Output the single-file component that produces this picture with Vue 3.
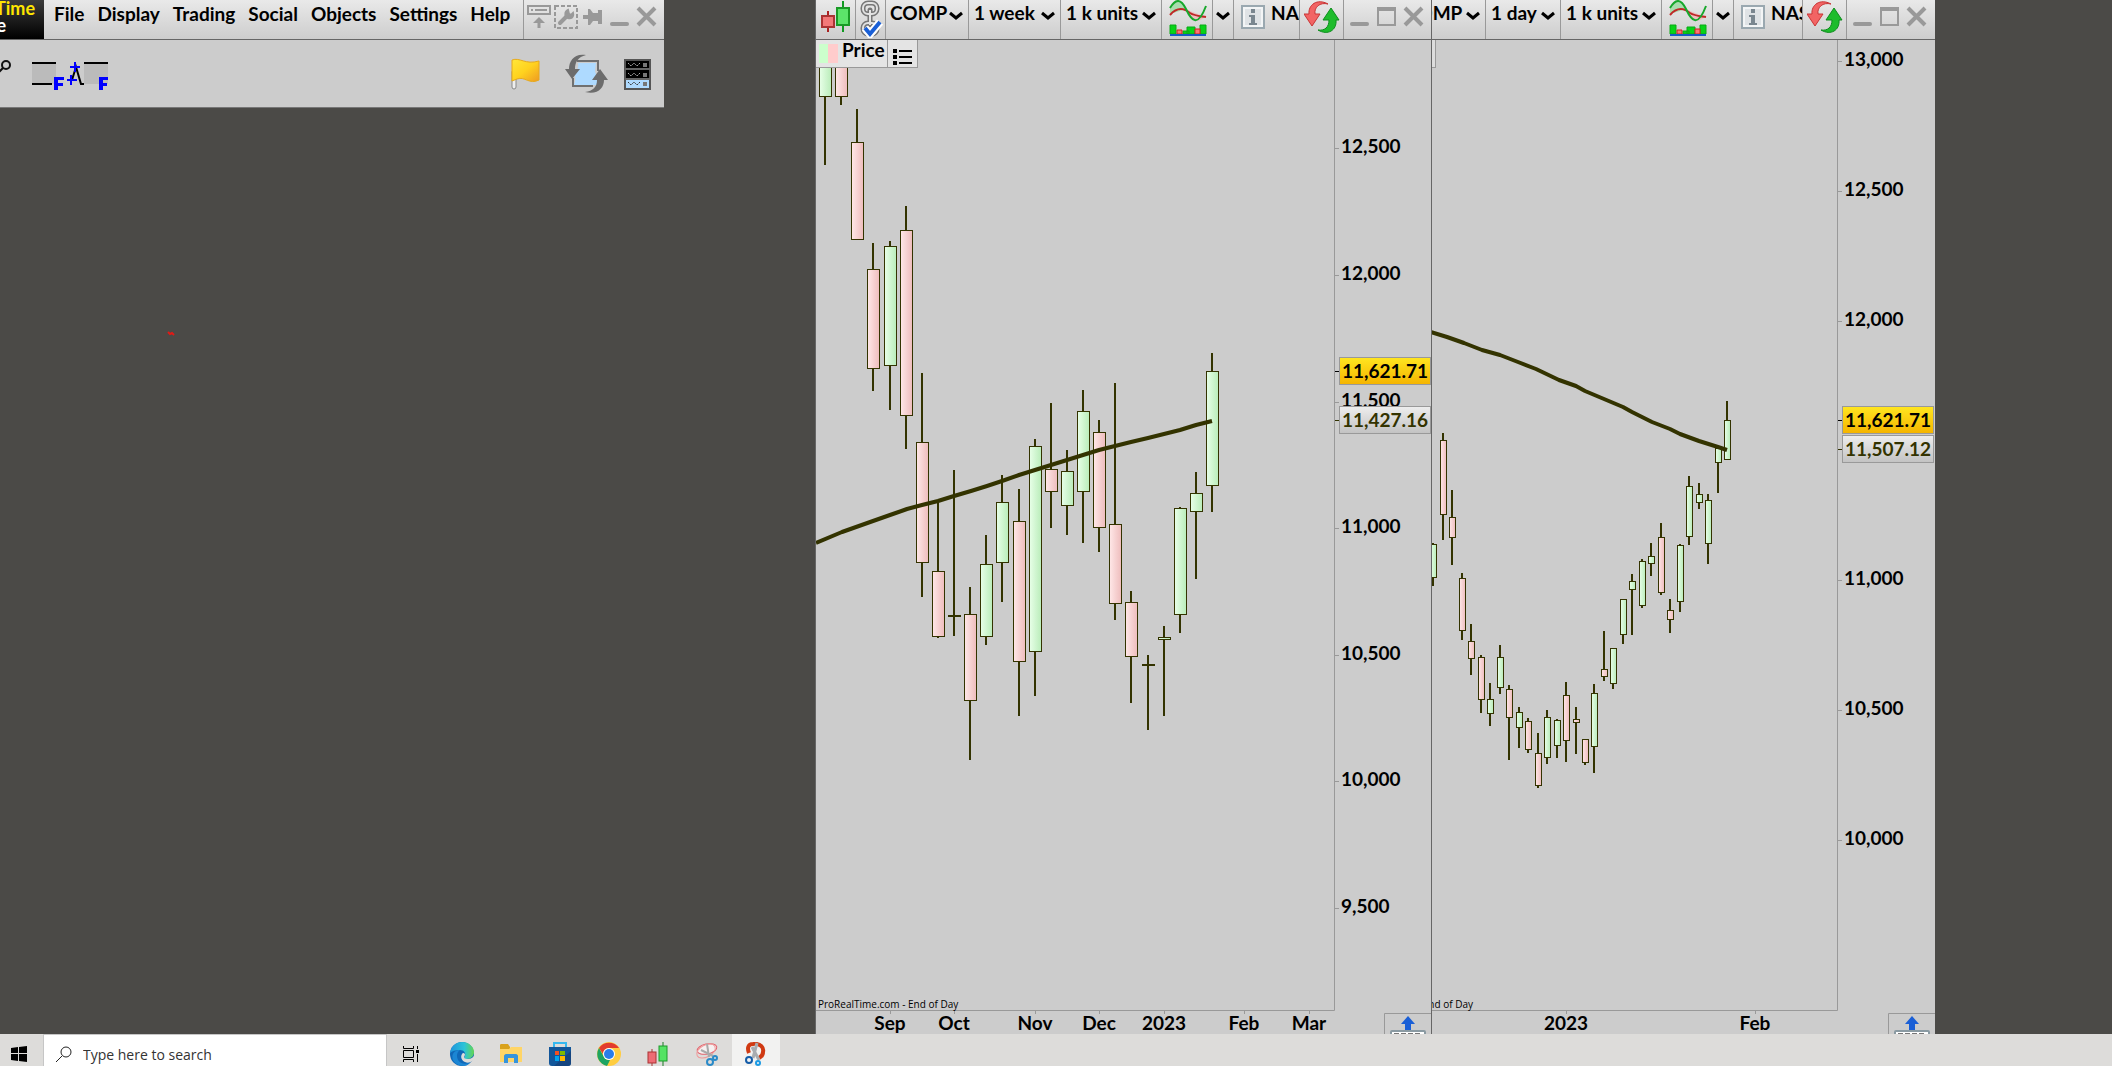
<script setup>
const menus = ['File', 'Display', 'Trading', 'Social', 'Objects', 'Settings', 'Help']

// candle: [x, high, body top, body bottom, low, rising]
const panels = [
  {
    id: 'weekly',
    origin: 816,
    width: 615,
    axisX: 1334,
    symbolWidth: 83,
    symbolCell: 83,
    period: '1 week',
    periodCell: 92,
    nameCell: 66,
    full: true,
    footer: { x: 818, anchor: 'start' },
    months: [[890, 'Sep'], [954, 'Oct'], [1035, 'Nov'], [1099, 'Dec'], [1164, '2023'], [1244, 'Feb'], [1309, 'Mar']],
    prices: [[148, '12,500'], [275, '12,000'], [402, '11,500'], [528, '11,000'], [655, '10,500'], [781, '10,000'], [908, '9,500']],
    last: { y: 371, text: '11,621.71' },
    average: { y: 420, text: '11,427.16' },
    line: '816,543 842,532 873,521 890,515 907,509 922,505 938,501 954,496 971,491 987,486 1002,481 1019,475 1035,470 1051,465 1067,460 1083,455 1099,450 1115,446 1131,442 1148,438 1164,434 1180,430 1196,425 1212,421',
    half: 6,
    candles: [
      [825, 40, 40, 97, 165, 1], [841, 40, 40, 97, 105, 0], [857, 109, 142, 240, 240, 0],
      [873, 243, 269, 369, 391, 0], [890, 241, 246, 366, 410, 1], [906, 206, 230, 416, 449, 0],
      [922, 373, 442, 563, 597, 0], [938, 503, 571, 637, 638, 0], [954, 470, 615, 617, 636, 0],
      [970, 587, 614, 701, 760, 0], [986, 535, 564, 637, 645, 1], [1002, 475, 502, 563, 602, 1],
      [1019, 489, 521, 662, 716, 0], [1035, 439, 446, 652, 696, 1], [1051, 403, 469, 492, 528, 0],
      [1067, 450, 471, 506, 535, 1], [1083, 390, 411, 492, 543, 1], [1099, 420, 432, 528, 552, 0],
      [1115, 383, 524, 604, 620, 0], [1131, 591, 602, 657, 703, 0], [1148, 655, 664, 666, 730, 0],
      [1164, 626, 637, 640, 716, 1], [1180, 507, 508, 615, 633, 1], [1196, 472, 493, 512, 579, 1],
      [1212, 353, 371, 486, 512, 1],
    ],
  },
  {
    id: 'daily',
    origin: 1432,
    width: 503,
    axisX: 1837,
    symbolWidth: 85,
    symbolCell: 54,
    period: '1 day',
    periodCell: 75,
    nameCell: 69,
    full: false,
    footer: { x: 1473, anchor: 'end' },
    months: [[1566, '2023'], [1755, 'Feb']],
    prices: [[61, '13,000'], [191, '12,500'], [321, '12,000'], [580, '11,000'], [710, '10,500'], [840, '10,000']],
    last: { y: 420, text: '11,621.71' },
    average: { y: 449, text: '11,507.12' },
    line: '1431,332 1447,337 1464,343 1482,350 1500,355 1518,362 1536,369 1559,380 1576,386 1585,391 1604,399 1623,407 1632,412 1642,417 1652,422 1670,429 1680,434 1699,441 1718,447 1727,450',
    half: 3,
    candles: [
      [1433, 543, 544, 578, 586, 1], [1443, 433, 440, 515, 540, 0], [1452, 490, 517, 538, 565, 0],
      [1462, 573, 578, 631, 640, 0], [1471, 624, 641, 659, 675, 0], [1481, 655, 657, 700, 713, 0],
      [1490, 683, 699, 714, 726, 1], [1500, 645, 657, 688, 694, 1], [1509, 685, 689, 718, 760, 0],
      [1519, 707, 712, 728, 748, 1], [1528, 718, 721, 750, 753, 0], [1538, 733, 753, 786, 788, 0],
      [1547, 710, 717, 758, 764, 1], [1557, 719, 720, 746, 758, 1], [1566, 682, 695, 741, 762, 0],
      [1576, 707, 719, 723, 754, 0], [1585, 739, 739, 763, 765, 0], [1594, 684, 693, 747, 773, 1],
      [1604, 631, 669, 677, 681, 0], [1613, 648, 648, 684, 689, 1], [1623, 599, 599, 635, 644, 1],
      [1632, 574, 581, 590, 635, 1], [1642, 559, 561, 606, 608, 1], [1651, 543, 556, 564, 576, 1],
      [1661, 523, 537, 593, 595, 0], [1670, 599, 610, 620, 633, 0], [1680, 544, 545, 602, 612, 1],
      [1689, 476, 486, 537, 545, 1], [1699, 483, 494, 503, 509, 1], [1708, 494, 500, 544, 564, 1],
      [1718, 448, 448, 463, 493, 1], [1727, 401, 420, 460, 460, 1],
    ],
  },
]
</script>

<template>
  <div class="screen">
    <main class="workspace">
      <section class="left">
        <div class="main-window">
          <header class="menubar">
            <div class="brand"><span class="brand-top">Time</span><span class="brand-sub">e</span></div>
            <nav class="menus">
              <button v-for="m in menus" :key="m" type="button">{{ m }}</button>
            </nav>
            <div class="window-tools">
              <button type="button" aria-label="Dock">
                <svg width="24" height="24" viewBox="0 0 24 24" fill="none" stroke="#999" stroke-width="2"><rect x="1" y="1" width="22" height="8" /><path d="M4 5h2M8 5h12" /><path d="M12 23v-7" stroke-width="3" /><path d="M6 18l6-6 6 6z" fill="#999" stroke="none" /></svg>
              </button>
              <button type="button" aria-label="Preferences">
                <svg width="24" height="24" viewBox="0 0 24 24" fill="none" stroke="#999"><rect x="1" y="1" width="22" height="22" stroke-width="2" stroke-dasharray="4 2" /><path d="M6 18l7-7" stroke-width="4" stroke-linecap="round" /><path d="M19 8c1 4-2 6-5 5-3-1-4-6 0-8l1 4 2 1z" fill="#999" stroke-width="2" /></svg>
              </button>
              <button type="button" aria-label="Pin">
                <svg width="24" height="24" viewBox="0 0 24 24"><path d="M2 10h5V4h2l3 4h5V5h4v14h-4v-3h-5l-3 4H7v-6H2z" fill="#999" /></svg>
              </button>
              <button type="button" aria-label="Minimize">
                <svg width="24" height="24" viewBox="0 0 24 24"><path d="M4 19h15" stroke="#999" stroke-width="4" stroke-linecap="round" /></svg>
              </button>
              <button type="button" aria-label="Close">
                <svg width="24" height="24" viewBox="0 0 24 24"><path d="M3 3l17 17M20 3L3 20" stroke="#999" stroke-width="4" /></svg>
              </button>
            </div>
          </header>
          <div class="toolbar">
            <div class="tools">
              <button type="button" aria-label="Zoom">
                <svg width="12" height="34" viewBox="0 0 12 34" fill="none" stroke="#111" stroke-width="2"><circle cx="6" cy="8" r="4" /><path d="M3 11l-4 4" /></svg>
              </button>
              <button type="button" aria-label="Fixed range">
                <svg width="36" height="34" viewBox="0 0 36 34"><path d="M3 7h24v20H3z" fill="#bbb" /><path d="M3 6h24M3 27h20" stroke="#000" stroke-width="2" /><path d="M25 33V20h10v3h-6v3h5v3h-5v4z" fill="#00f" /></svg>
              </button>
              <button type="button" aria-label="Fixed peaks">
                <svg width="44" height="34" viewBox="0 0 44 34"><path d="M18 7h24v20H18z" fill="#bbb" /><path d="M18 6h24" stroke="#000" stroke-width="2" /><path d="M6 23l4-13 5 17h3" fill="none" stroke="#000" stroke-width="2" /><path d="M9 5v10M4 10h10M5 18v10M1 23h10" stroke="#00f" stroke-width="2" /><path d="M33 33V20h9v3h-5v3h4v3h-4v4z" fill="#00f" /></svg>
              </button>
            </div>
            <div class="tools actions">
              <button type="button" aria-label="Flag">
                <svg width="40" height="40" viewBox="0 0 40 40"><defs><linearGradient id="flag" x2="1" y2="1"><stop offset="0" stop-color="#ffe73a" /><stop offset=".5" stop-color="#ffd21e" /><stop offset="1" stop-color="#ee9a22" /></linearGradient></defs><rect x="3" y="16" width="4" height="19" rx="2" fill="#eee" stroke="#888" /><path d="M3 6c8-3 13 5 27 1v19c-10 5-14-4-22-1l-5 2z" fill="url(#flag)" stroke="#e6a91d" /></svg>
              </button>
              <button type="button" aria-label="Synchronize">
                <svg width="44" height="40" viewBox="0 0 44 40"><path d="M14 9h18c-1 8-2 9 2 14l-1 8H10c3-9 0-9-1-12 4-1 6-5 5-10z" fill="#aedaff" /><path d="M13 7h21v10M9 24v8h20" fill="none" stroke="#707070" stroke-width="2" /><path d="M22 1C10-1 5 7 5 15H1l7 10 8-10h-5C11 8 14 3 22 1z" fill="#6c6c6c" /><path d="M21 38c13 3 19-4 19-12h4l-8-11-8 11h5c0 7-4 11-12 12z" fill="#6c6c6c" /></svg>
              </button>
              <button type="button" aria-label="Servers">
                <svg width="28" height="40" viewBox="0 0 28 40"><rect x="2" y="6" width="25" height="29" fill="#000" stroke="#555" stroke-width="2" /><path d="M3 25h23v9H3z" fill="#aedaff" /><path d="M2 15h25M2 25h25" stroke="#666" stroke-width="2" /><g fill="none" stroke="#aaa" stroke-dasharray="2 1"><path d="M5 9l3 3 3-3 3 3 3-3M5 19l3 3 3-3 3 3 3-3" /><path d="M5 28l3 3 3-3 3 3 3-3" stroke="#333" /></g><path d="M20 9h4v4h-4zM20 19h4v4h-4zM20 28h4v4h-4z" fill="#777" /></svg>
              </button>
            </div>
          </div>
        </div>
        <svg class="ink" width="8" height="6" viewBox="0 0 8 6" aria-hidden="true"><path d="M1 1l2 2 2-1 2 2" fill="none" stroke="#e01a16" stroke-width="2" /></svg>
      </section>

      <section v-for="p in panels" :key="p.id" class="chart-window" :class="p.id">
        <header class="chart-bar">
          <button v-if="p.full" type="button" class="cell candle-cell" aria-label="Chart style">
            <svg width="32" height="34" viewBox="0 0 32 34"><path d="M9 11v21" stroke="#a22" stroke-width="2" /><rect x="3" y="16" width="12" height="11" fill="#f27878" stroke="#a33" stroke-width="2" /><path d="M24 1v31" stroke="#119a22" stroke-width="2" /><rect x="18" y="8" width="12" height="17" fill="#5ce46a" stroke="#1a9a26" stroke-width="2" /></svg>
          </button>
          <button v-if="p.full" type="button" class="cell link-cell" aria-label="Link windows">
            <svg width="24" height="38" viewBox="0 0 24 38" fill="none"><g stroke="#777" stroke-width="5"><rect x="4" y="3" width="14" height="11" rx="5" /><rect x="4" y="23" width="14" height="11" rx="5" /><path d="M11 10v15" stroke-linecap="round" /></g><g stroke="#e2e2e2" stroke-width="2"><rect x="4" y="3" width="14" height="11" rx="5" /><rect x="4" y="23" width="14" height="11" rx="5" /><path d="M11 10v15" /></g><path d="M6 28l5 6 10-12" stroke="#fff" stroke-width="8" /><path d="M6 28l5 6 10-12" stroke="#1a5fd6" stroke-width="4" /></svg>
          </button>
          <div class="cell pick" :style="{ width: p.symbolCell + 'px' }">
            <select aria-label="Symbol" :style="{ width: p.symbolWidth + 'px' }"><option>COMP</option></select>
            <svg class="chev" width="14" height="10" viewBox="0 0 14 10"><path d="M1 2l6 5 6-5" /></svg>
          </div>
          <div class="cell pick" :style="{ width: p.periodCell + 'px' }">
            <select aria-label="Period"><option>{{ p.period }}</option></select>
            <svg class="chev" width="14" height="10" viewBox="0 0 14 10"><path d="M1 2l6 5 6-5" /></svg>
          </div>
          <div class="cell pick units">
            <select aria-label="History length"><option>1 k units</option></select>
            <svg class="chev" width="14" height="10" viewBox="0 0 14 10"><path d="M1 2l6 5 6-5" /></svg>
          </div>
          <button type="button" class="cell indicator-cell" aria-label="Indicators">
            <svg width="38" height="38" viewBox="0 0 38 38"><path d="M1 8C7-2 12-1 17 9L1 14z" fill="#a9dcae" /><path d="M17 9c9 4 14 6 20 7-8 8-15 6-20-7z" fill="#ecc0c0" /><path d="M1 15c7-8 14-7 20-2 5 3 10 3 16 4" fill="none" stroke="#c02828" stroke-width="2" /><path d="M1 8C7-2 12-1 17 9c6 13 12 18 20-3" fill="none" stroke="#18a82c" stroke-width="2" /><path d="M1 25h6v9H1zM14 31h6v3h-6zM18 27h8v7h-8zM31 25h6v9h-6z" fill="#08d418" stroke="#0aa916" /><path d="M8 30h5v4H8zM26 29h5v5h-5z" fill="#ff7474" stroke="#c22" /><path d="M1 35h36" stroke="#185cc4" stroke-width="2" /></svg>
          </button>
          <button type="button" class="cell more-cell" aria-label="More indicators">
            <svg class="chev" width="14" height="10" viewBox="0 0 14 10"><path d="M1 2l6 5 6-5" /></svg>
          </button>
          <div class="cell name-cell" :style="{ width: p.nameCell + 'px' }">
            <svg width="24" height="24" viewBox="0 0 24 24"><rect x="1" y="1" width="22" height="22" fill="#f3f5f6" stroke="#9aa8b0" stroke-width="2" /><path d="M4 4h16v16H4z" fill="#dfe3e6" /><path d="M10 4h4v4h-4zM8 10h6v8h2v2H8v-2h2v-6H8z" fill="#7a8790" /></svg>
            <span>NASDAQ</span>
          </div>
          <button type="button" class="cell refresh-cell" aria-label="Refresh">
            <svg width="36" height="34" viewBox="0 0 36 34"><path d="M24 4C13-2 4 5 5 14H0l8 12 8-12h-5c-1-7 5-12 13-10z" fill="#f26464" stroke="#c83434" /><path d="M14 30c10 6 19 0 18-10h3L27 8l-8 12h6c0 7-4 11-11 10z" fill="#1ebc2c" stroke="#0c8d1c" /></svg>
          </button>
          <div class="controls">
            <button type="button" aria-label="Minimize"><svg width="21" height="22" viewBox="0 0 21 22"><path d="M3 18h15" stroke="#999" stroke-width="4" stroke-linecap="round" /></svg></button>
            <button type="button" aria-label="Maximize"><svg width="21" height="22" viewBox="0 0 21 22"><path d="M2 2h17v17H2zM2 4h17" fill="none" stroke="#999" stroke-width="2" /></svg></button>
            <button type="button" aria-label="Close"><svg width="21" height="22" viewBox="0 0 21 22"><path d="M2 2l17 17M19 2L2 19" stroke="#999" stroke-width="4" /></svg></button>
          </div>
        </header>

        <div class="chart-body">
          <svg class="chart" :viewBox="`${p.origin} 40 ${p.width} 994`" role="img" :aria-label="p.period + ' price chart'">
            <defs>
              <linearGradient :id="p.id + 'Up'"><stop offset="0" stop-color="#e8ffe8" /><stop offset="1" stop-color="#b9ecb9" /></linearGradient>
              <linearGradient :id="p.id + 'Down'"><stop offset="0" stop-color="#ffe8e8" /><stop offset="1" stop-color="#eebcbc" /></linearGradient>
              <linearGradient :id="p.id + 'Last'" x2="0" y2="1"><stop offset="0" stop-color="#ffe620" /><stop offset="1" stop-color="#f5b400" /></linearGradient>
              <linearGradient :id="p.id + 'Avg'" x2="0" y2="1"><stop offset="0" stop-color="#eee" /><stop offset="1" stop-color="#c2c2c2" /></linearGradient>
            </defs>
            <g v-for="c in p.candles" :key="c[0]">
              <rect :x="c[0] - 1" :y="c[1]" width="2" :height="c[4] - c[1]" fill="#330" />
              <rect :x="c[0] - p.half + 0.5" :y="c[2] + 0.5" :width="p.half * 2" :height="Math.max(c[3] - c[2] - 1, 1)" :fill="`url(#${p.id}${c[5] ? 'Up' : 'Down'})`" stroke="#330" />
            </g>
            <polyline :points="p.line" fill="none" stroke="#330" stroke-width="4" stroke-linejoin="round" />
            <path :d="`M${p.origin} 1010.5H${p.axisX + 0.5}V40`" fill="none" stroke="#999" />
            <text class="credit" :x="p.footer.x" y="1008" :text-anchor="p.footer.anchor">ProRealTime.com - End of Day</text>
            <g v-for="m in p.months" :key="m[1]">
              <path :d="`M${m[0] + 0.5} 1011v3`" stroke="#999" />
              <text class="label" :x="m[0]" y="1030" text-anchor="middle">{{ m[1] }}</text>
            </g>
            <g v-for="r in p.prices" :key="r[1]">
              <path :d="`M${p.axisX + 1} ${r[0] + 0.5}h4`" stroke="#999" />
              <text class="label" :x="p.axisX + 7" :y="r[0] + 5">{{ r[1] }}</text>
            </g>
            <path :d="`M${p.axisX + 1} ${p.last.y + 0.5}h4`" stroke="#000" />
            <path :d="`M${p.axisX + 1} ${p.average.y + 0.5}h4`" stroke="#330" />
            <rect :x="p.axisX + 5.5" :y="p.average.y - 13.5" width="91" height="27" :fill="`url(#${p.id}Avg)`" stroke="#999" />
            <text class="label avg" :x="p.axisX + 8" :y="p.average.y + 7">{{ p.average.text }}</text>
            <rect :x="p.axisX + 5.5" :y="p.last.y - 13.5" width="91" height="27" :fill="`url(#${p.id}Last)`" stroke="#999" />
            <text class="label" :x="p.axisX + 8" :y="p.last.y + 7">{{ p.last.text }}</text>
            <g :transform="`translate(${p.origin + p.width - 47} 1013)`">
              <path d="M.5 22V.5H47" fill="none" stroke="#999" />
              <path d="M24 3l7 8h-4v6h-6v-6h-4z" fill="#1a5fd6" />
              <rect x="7" y="18" width="34" height="8" rx="1" fill="#fff" stroke="#8a9aa2" stroke-width="2" />
              <path d="M10 20.5h28" stroke="#777" stroke-dasharray="5 2" />
            </g>
          </svg>
          <div class="legend" :class="{ folded: !p.full }">
            <template v-if="p.full">
              <span class="legend-name"><i class="swatch"></i>Price</span>
              <button type="button" aria-label="Price settings">
                <svg width="20" height="16" viewBox="0 0 20 16"><path d="M0 0h4v4H0zM0 6h4v4H0zM0 12h4v4H0z" /><path d="M6 2h13M6 8h13M6 14h13" stroke="#000" stroke-width="2" /></svg>
              </button>
            </template>
          </div>
        </div>
      </section>
    </main>

    <footer class="taskbar">
      <button type="button" class="start" aria-label="Start">
        <svg width="16" height="16" viewBox="0 0 16 16"><path d="M0 2l7-1v6H0zM8 1l8-1v7H8zM0 8h7v7l-7-1zM8 8h8v8l-8-1z" /></svg>
      </button>
      <label class="search">
        <svg width="18" height="18" viewBox="0 0 18 18" fill="none" stroke="#222"><circle cx="11" cy="7" r="5" /><path d="M7 11l-6 6" /></svg>
        <input type="text" aria-label="Search" placeholder="Type here to search" />
      </label>
      <button type="button" class="task-view" aria-label="Task view">
        <svg width="18" height="16" viewBox="0 0 18 16" fill="none" stroke="#000"><path d="M1.500 4.500h10v7h-10zM1.500 0v2.500h10V0M1.500 16v-2.500h10V16M15.500 0v3M15.500 8v8" /><path d="M14 4h3v3h-3z" fill="#000" stroke="none" /></svg>
      </button>
      <div class="apps">
        <button type="button" aria-label="Edge">
          <svg width="24" height="24" viewBox="0 0 24 24"><defs><linearGradient id="edgeTop" x2="1"><stop offset="0" stop-color="#1f94dc" /><stop offset=".6" stop-color="#2cc4d8" /><stop offset="1" stop-color="#64d650" /></linearGradient></defs><circle cx="12" cy="12" r="12" fill="#1068b8" /><path d="M0 11C1 4 6 0 12 0c7 0 12 5 12 10 0 4-3 7-7 7-3 0-3-1-2-3 1-3-1-6-5-6C5 8 2 9 0 11z" fill="url(#edgeTop)" /><path d="M10 8c-3 2-4 6-2 10 2 3 6 5 12 3-5 5-14 3-17-3-2-5 1-10 7-10z" fill="#1c86d4" /><path d="M12 12c1-2 3-1 3 1-2 3 0 4 3 4 3 0 5-2 6-3v4l-2 1c-2 2-5 2-7 1-3-1-5-5-3-8z" fill="#dddcda" /></svg>
        </button>
        <button type="button" aria-label="File Explorer">
          <svg width="24" height="22" viewBox="0 0 24 22"><path d="M1 3c0-1 0-2 1-2h7l2 3v4H1z" fill="#d9a21c" /><path d="M1 6h9l2-2h11v14c0 1 0 1-1 1H2c-1 0-1 0-1-1z" fill="#ffd566" /><path d="M5 20v-7c0-1 1-2 2-2h10c1 0 2 1 2 2v7h-4v-5H9v5z" fill="#3694dc" /></svg>
        </button>
        <button type="button" aria-label="Store">
          <svg width="24" height="24" viewBox="0 0 24 24"><path d="M6 5V1h12v4" fill="none" stroke="#35b8f0" stroke-width="2" /><path d="M1 5h22v16c0 2-1 3-3 3H4c-2 0-3-1-3-3z" fill="#12569a" /><path d="M23 9v12c0 2-1 3-3 3H6z" fill="#173f73" opacity=".7" /><path d="M7 9h4v4H7z" fill="#f25022" /><path d="M12 9h5v4h-5z" fill="#7fba00" /><path d="M7 14h4v5H7z" fill="#00a4ef" /><path d="M12 14h5v5h-5z" fill="#ffb900" /></svg>
        </button>
        <button type="button" aria-label="Chrome">
          <svg width="24" height="24" viewBox="0 0 24 24"><circle cx="12" cy="12" r="12" fill="#ffcd40" /><path d="M2 6a12 12 0 0 1 20 0H12a6 6 0 0 0-6 6z" fill="#e33b2e" /><path d="M2 6l5 9c1 2 3 3 5 3l1 0-3 6A12 12 0 0 1 2 6z" fill="#1da462" /><circle cx="12" cy="12" r="6" fill="#fff" /><circle cx="12" cy="12" r="5" fill="#2a7de9" /></svg>
        </button>
        <button type="button" aria-label="ProRealTime">
          <svg width="22" height="26" viewBox="0 0 22 26"><path d="M5 8v17" stroke="#a33" /><rect x="1" y="11" width="8" height="11" fill="#ee6c74" stroke="#a33" /><path d="M16 1v24" stroke="#197a22" /><rect x="12" y="5" width="8" height="15" fill="#55e364" stroke="#1d9a2a" /></svg>
        </button>
        <button type="button" aria-label="Snipping Tool">
          <svg width="24" height="24" viewBox="0 0 24 24" fill="none"><ellipse cx="12" cy="7" rx="10" ry="5" fill="#f6f0f0" stroke="#e0606a" transform="rotate(-12 12 7)" /><ellipse cx="11" cy="9" rx="10" ry="6" stroke="#ef9a9a" transform="rotate(-28 11 9)" /><path d="M12 2l2 13M6 8l12 6" stroke="#aaa" stroke-width="2" /><circle cx="15" cy="20" r="3" stroke="#2a8ac8" stroke-width="2" /><circle cx="20" cy="16" r="2" stroke="#2a8ac8" stroke-width="2" /></svg>
        </button>
        <button type="button" class="active" aria-label="Snip and Sketch">
          <svg width="22" height="24" viewBox="0 0 22 24" fill="none"><path d="M4 11C2 6 3 2 8 2c8-1 11 4 10 8 0 4-2 5-4 6" stroke="#d03a12" stroke-width="4" /><path d="M12 1L8 16M7 5l7 13" stroke="#a8acb0" stroke-width="3" /><circle cx="4" cy="18" r="3" stroke="#145ca8" stroke-width="2" /><circle cx="13" cy="21" r="2" stroke="#1c9ae4" stroke-width="2" /></svg>
        </button>
      </div>
    </footer>
  </div>
</template>

<style>
body {
  margin: 0;
  background: #4b4a47;
}
</style>

<style scoped>
.screen {
  display: flex;
  flex-direction: column;
  height: 100vh;
  overflow: hidden;
  background: #4b4a47;
  font-family: Lato, "Liberation Sans", sans-serif;
  font-size: 19px;
  font-weight: 700;
  color: #000;
}
.screen * { box-sizing: border-box; }
button {
  margin: 0;
  padding: 0;
  border: 0;
  background: none;
  font: inherit;
  color: inherit;
}
svg { display: block; flex: none; }
.workspace {
  flex: 1;
  min-height: 0;
  display: grid;
  grid-template-columns: minmax(0, 815fr) minmax(0, 616fr) minmax(0, 504fr) minmax(0, 177fr);
  overflow: hidden;
}
.left { position: relative; }
.main-window {
  width: 664px;
  max-width: 100%;
  background: #ccc;
  border-bottom: 1px solid #777;
}
.menubar {
  display: flex;
  height: 40px;
  background: linear-gradient(#e9e9e9, #cdcdcd);
  border-bottom: 1px solid #666;
}
.brand {
  display: flex;
  flex-direction: column;
  width: 44px;
  overflow: hidden;
  background: linear-gradient(#3a3a3a, #000);
  font-size: 18px;
  line-height: 17px;
}
.brand span { display: flex; justify-content: flex-end; }
.brand-top { width: 35px; color: #ffe600; }
.brand-sub { width: 6px; color: #fff; }
.menus {
  flex: 1;
  display: flex;
  gap: 13px;
  padding-left: 10px;
  line-height: 28px;
  align-items: flex-start;
}
.window-tools {
  display: flex;
  gap: 3px;
  width: 141px;
  padding: 5px 3px;
  border-left: 1px solid #999;
  align-items: flex-start;
}
.toolbar {
  display: flex;
  justify-content: space-between;
  height: 67px;
  padding: 14px 13px 0 0;
}
.tools { display: flex; align-items: flex-start; }
.tools:first-child { gap: 1px; padding-top: 3px; }
.tools:first-child button:first-child { margin-right: 16px; }
.actions { gap: 15px; }
.ink { position: absolute; left: 167px; top: 331px; }

.chart-window {
  display: flex;
  flex-direction: column;
  border-left: 1px solid #666;
  background: #ccc;
  overflow: hidden;
}
.chart-bar {
  display: flex;
  flex: none;
  height: 40px;
  background: linear-gradient(#e9e9e9, #cdcdcd);
  border-bottom: 1px solid #666;
  overflow: hidden;
}
.cell {
  flex: none;
  display: flex;
  border-right: 1px solid #999;
  overflow: hidden;
}
.candle-cell { width: 40px; padding-left: 3px; }
.link-cell { width: 30px; padding-left: 3px; }
.pick { position: relative; justify-content: flex-end; }
.pick select {
  flex: none;
  width: 100%;
  height: 26px;
  padding: 0 0 0 5px;
  border: 0;
  appearance: none;
  background: none;
  font: inherit;
  color: inherit;
  line-height: 26px;
}
.units { width: 101px; }
.chev { fill: none; stroke: #000; stroke-width: 3; }
.pick .chev { position: absolute; right: 5px; top: 11px; pointer-events: none; }
.indicator-cell { width: 51px; padding-left: 7px; }
.more-cell { width: 21px; padding: 11px 3px; }
.name-cell { gap: 6px; padding-left: 7px; line-height: 26px; }
.name-cell svg { margin-top: 5px; }
.refresh-cell { width: 44px; padding-left: 4px; }
.controls { display: flex; gap: 6px; padding: 6px 0 0 5px; align-items: flex-start; }

.chart-body { position: relative; flex: 1; min-height: 0; overflow: hidden; }
.chart { width: 100%; height: auto; }
.label { font-size: 19px; fill: #000; }
.avg { fill: #330; }
.credit { font-family: "Open Sans", sans-serif; font-size: 10px; font-weight: 400; }
.legend {
  position: absolute;
  left: 0;
  top: 0;
  display: flex;
  height: 28px;
  background: #e4e4e4;
  border: solid #999;
  border-width: 0 1px 1px 0;
}
.legend.folded { width: 4px; background: #ddd; }
.legend-name { display: flex; gap: 4px; width: 72px; padding-left: 3px; line-height: 20px; border-right: 1px solid #999; }
.legend button { width: 29px; padding: 7px 0 0 5px; }
.swatch { width: 19px; height: 19px; margin-top: 4px; background: linear-gradient(90deg, #cfc 50%, #fcc 50%); }

.taskbar {
  flex: none;
  display: flex;
  height: 32px;
  overflow: hidden;
  background: #dddcda;
  font-family: "Open Sans", sans-serif;
  font-weight: 400;
}
.taskbar > * { height: 40px; flex: none; }
.start { width: 43px; padding-left: 11px; }
.search {
  display: flex;
  align-items: center;
  gap: 10px;
  width: 344px;
  padding-left: 11px;
  background: #fff;
  border: 1px solid #c6c6c6;
}
.search input {
  flex: 1;
  min-width: 0;
  padding: 0;
  border: 0;
  outline: 0;
  background: none;
  font: inherit;
  font-size: 14px;
}
.search input::placeholder { color: #333; opacity: 1; }
.task-view { width: 51px; padding-left: 15px; }
.apps { display: flex; gap: 1px; }
.apps button { display: flex; align-items: center; justify-content: center; width: 48px; }
.apps .active { background: #f2f2f1; }
</style>
